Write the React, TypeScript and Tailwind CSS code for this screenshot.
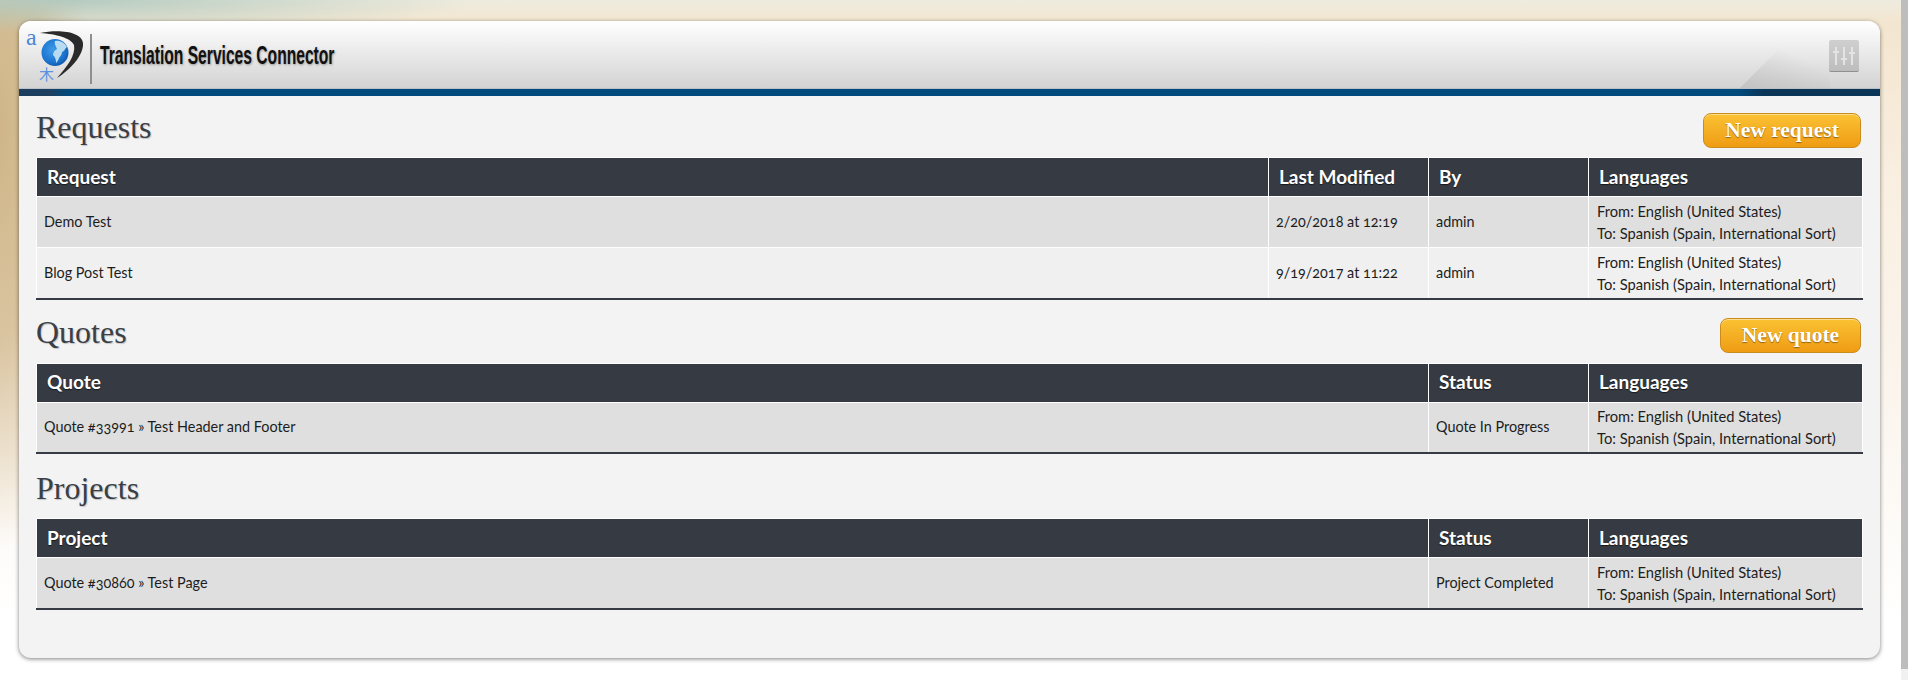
import React from 'react';

type Column = { label: string; width?: string };
type Row = { cells: string[] };

const FROM = 'From: English (United States)';
const TO = 'To: Spanish (Spain, International Sort)';

const Logo = () => (
  <svg width="62" height="54" viewBox="0 0 62 54" className="shrink-0 overflow-visible">
    <defs>
      <radialGradient id="globe" cx="0.42" cy="0.4" r="0.7">
        <stop offset="0" stopColor="#3f9be8" />
        <stop offset="0.65" stopColor="#1b74cf" />
        <stop offset="1" stopColor="#0d4f9c" />
      </radialGradient>
    </defs>
    <path d="M16 4 C36 0 58 3 59 14 C60 26 46 41 33 49 C43 38 52 26 50 16 C47 9 32 5 16 4 Z" fill="#2a2a2a" />
    <circle cx="31" cy="23.5" r="13.5" fill="url(#globe)" />
    <path d="M31 12 C36 11 41 14 43 18 C41 19 41 22 38 23 C38 26 36 27 35 29 C34 32 33 33 32 34 C32 30 31 28 29 26 C29 23 31 21 33 20 C32 17 30 15 31 12 Z" fill="#b7dcf2" />
    <text x="2" y="16" fontFamily="'Liberation Serif', serif" fontSize="24" fill="#4a86d8">a</text>
    <text x="15" y="51" fontFamily="'Noto Sans CJK SC', sans-serif" fontSize="15" fill="#5a94e0">木</text>
  </svg>
);

const SettingsIcon = () => (
  <div className="w-[30px] h-[32px] rounded-[2px] bg-gradient-to-b from-[#cfcfcf] to-[#bdbdbd] border-b border-[#8f8f8f] flex items-center justify-center">
    <svg width="26" height="20" viewBox="0 0 26 20" stroke="#e4e4e4" strokeWidth="2" fill="none">
      <path d="M5 1v18M13 1v18M21 1v18M2 6h6M10 13h6M18 7h6" />
    </svg>
  </div>
);

const HeaderBar = () => (
  <div className="relative">
    <div className="relative flex items-center justify-between h-[68px] pl-[5px] pr-[21px] bg-gradient-to-b from-[#ffffff] to-[#d3d3d3] border-b border-[#b9c0c6]">
      <svg className="absolute right-[50px] bottom-0" width="90" height="42" viewBox="0 0 90 42">
        <defs>
          <linearGradient id="fold" x1="0" y1="1" x2="1" y2="0">
            <stop offset="0" stopColor="#b5b5b5" stopOpacity="0.55" />
            <stop offset="0.7" stopColor="#b5b5b5" stopOpacity="0" />
          </linearGradient>
        </defs>
        <path d="M0 42 L42 0 L90 0 L90 42 Z" fill="url(#fold)" />
      </svg>
      <div className="flex items-center h-full">
        <div className="mt-[3px]"><Logo /></div>
        <div className="w-[2px] h-[50px] bg-[#8e8e8e] ml-[4px] mt-[9px]" />
        <span className="ml-[8px] mt-[3px] font-['Liberation_Sans',sans-serif] font-bold text-[25px] text-[#111] whitespace-nowrap origin-left scale-x-[0.625] [text-shadow:1px_1px_3px_rgba(0,0,0,0.35)]">
          Translation Services Connector
        </span>
      </div>
      <div className="relative mt-[3px]"><SettingsIcon /></div>
    </div>
    <div className="h-[7px] bg-[linear-gradient(to_right,#1d3f5f_0px,#1d3f5f_30px,#004a7c_50px,#004a7c_1720px,#0b3557_1745px,#0b3557_100%)]" />
  </div>
);

const SectionTitle = ({ title, action, actionWidth }: { title: string; action?: string; actionWidth?: string }) => (
  <div className="flex items-center justify-between h-[36px]">
    <h2 className="pb-[7px] font-['Liberation_Serif',serif] text-[32px] leading-none text-[#3a3f47] [text-shadow:1px_1px_1px_rgba(0,0,0,0.2)]">
      {title}
    </h2>
    {action && (
      <button
        className={`${actionWidth} h-[35px] rounded-[8px] border border-[#c98d1e] bg-gradient-to-b from-[#fac232] to-[#ef9c12] shadow-[inset_0_1px_0_rgba(255,255,255,0.45)] font-['Liberation_Serif',serif] font-bold text-[21.5px] text-white [text-shadow:0_1px_1px_rgba(90,50,0,0.6)]`}
      >
        {action}
      </button>
    )}
  </div>
);

const DataTable = ({ columns, rows }: { columns: Column[]; rows: Row[] }) => (
  <table className="w-[1827px] table-fixed border-collapse border-b-2 border-b-[#363a42] font-['Lato',sans-serif] [font-feature-settings:'onum']">
    <colgroup>
      {columns.map((c) => (
        <col key={c.label} className={c.width} />
      ))}
    </colgroup>
    <thead>
      <tr className="h-[39px] bg-[#363a42]">
        {columns.map((c) => (
          <th
            key={c.label}
            className="border border-white pl-[10px] text-left text-[19px] font-bold text-white [text-shadow:0_1px_1px_rgba(0,0,0,0.6)]"
          >
            {c.label}
          </th>
        ))}
      </tr>
    </thead>
    <tbody>
      {rows.map((r, i) => (
        <tr key={i} className={`h-[51px] ${i % 2 === 0 ? 'bg-[#dfdfdf]' : 'bg-[#f0f0f0]'}`}>
          {r.cells.map((cell) => (
            <td key={cell} className="border-x border-t border-white pl-[7px] text-[14.4px] text-[#1d1d1d]">
              {cell}
            </td>
          ))}
          <td className="border-x border-t border-white pl-[8px] text-[14.7px] leading-[22px] text-[#1d1d1d]">
            <div>{FROM}</div>
            <div>{TO}</div>
          </td>
        </tr>
      ))}
    </tbody>
  </table>
);

const App: React.FC = () => {
  return (
    <div className="flex h-[680px] w-full overflow-hidden">
      <div className="flex-1 h-full pt-[21px] pl-[19px] pr-[21px] bg-[radial-gradient(ellipse_420px_34px_at_60px_0px,#b4cabf_0%,rgba(180,202,191,0)_100%),radial-gradient(ellipse_90px_420px_at_0px_130px,#cfb588_0%,rgba(207,181,136,0.75)_50%,rgba(207,181,136,0)_100%),linear-gradient(to_bottom,#eeecdf_0px,#f3e6d0_22px,#faf0e2_200px,#fbf5ee_400px,#ffffff_620px)]">
        <div className="h-[637px] rounded-[12px] bg-[#f3f3f3] overflow-hidden shadow-[0_1px_4px_rgba(0,0,0,0.5)]">
          <HeaderBar />
          <div className="pl-[17px] pt-[16px]">
            <div className="pr-[19px]">
              <SectionTitle title="Requests" action="New request" actionWidth="w-[158px]" />
            </div>
            <div className="mt-[9px]">
              <DataTable
                columns={[
                  { label: 'Request' },
                  { label: 'Last Modified', width: 'w-[160px]' },
                  { label: 'By', width: 'w-[160px]' },
                  { label: 'Languages', width: 'w-[274px]' },
                ]}
                rows={[
                  { cells: ['Demo Test', '2/20/2018 at 12:19', 'admin'] },
                  { cells: ['Blog Post Test', '9/19/2017 at 11:22', 'admin'] },
                ]}
              />
            </div>
            <div className="pr-[19px] mt-[18px]">
              <SectionTitle title="Quotes" action="New quote" actionWidth="w-[141px]" />
            </div>
            <div className="mt-[9px]">
              <DataTable
                columns={[
                  { label: 'Quote' },
                  { label: 'Status', width: 'w-[160px]' },
                  { label: 'Languages', width: 'w-[274px]' },
                ]}
                rows={[{ cells: ['Quote #33991 » Test Header and Footer', 'Quote In Progress'] }]}
              />
            </div>
            <div className="pr-[19px] mt-[19px]">
              <SectionTitle title="Projects" />
            </div>
            <div className="mt-[9px]">
              <DataTable
                columns={[
                  { label: 'Project' },
                  { label: 'Status', width: 'w-[160px]' },
                  { label: 'Languages', width: 'w-[274px]' },
                ]}
                rows={[{ cells: ['Quote #30860 » Test Page', 'Project Completed'] }]}
              />
            </div>
          </div>
        </div>
      </div>
      <div className="w-[7px] h-full flex flex-col bg-[#f1f1f1]">
        <div className="h-[669px] bg-[#bdbdbd]" />
      </div>
    </div>
  );
};

export default App;
